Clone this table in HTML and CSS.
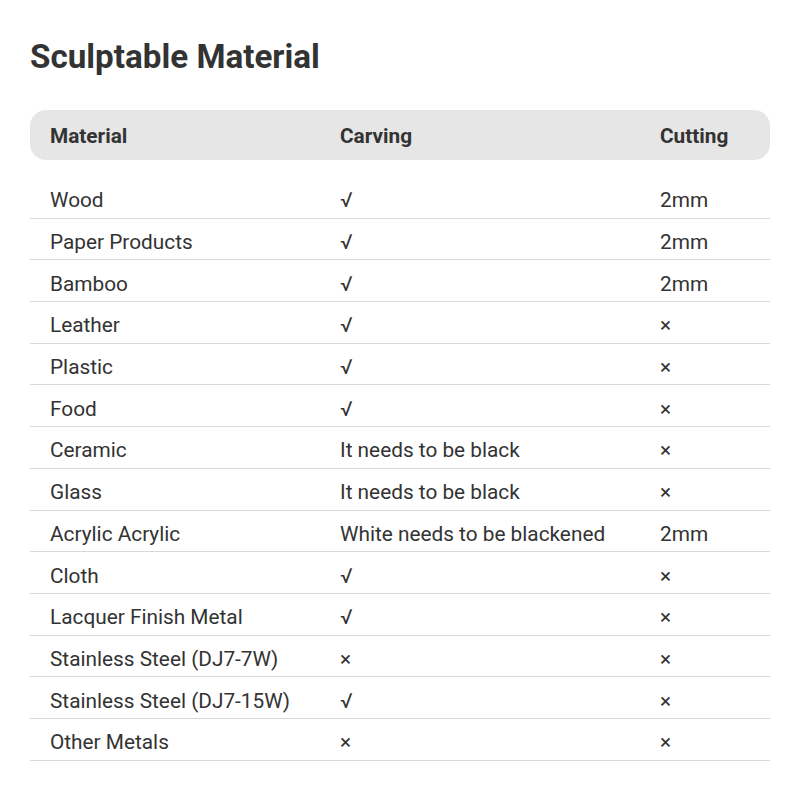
FILE: index.html
```html
<!DOCTYPE html>
<html>
<head>
<meta charset="utf-8">
<link rel="stylesheet" href="styles.css">
</head>
<body>
<div class="page">
  <h1 class="title">Sculptable Material</h1>
  <table class="spec">
    <thead>
      <tr><th class="c1">Material</th><th class="c2">Carving</th><th class="c3">Cutting</th></tr>
    </thead>
    <tbody>
      <tr class="spacer"><td colspan="3"></td></tr>
      <tr><td>Wood</td><td>√</td><td>2mm</td></tr>
      <tr><td>Paper Products</td><td>√</td><td>2mm</td></tr>
      <tr><td>Bamboo</td><td>√</td><td>2mm</td></tr>
      <tr><td>Leather</td><td>√</td><td>×</td></tr>
      <tr><td>Plastic</td><td>√</td><td>×</td></tr>
      <tr><td>Food</td><td>√</td><td>×</td></tr>
      <tr><td>Ceramic</td><td>It needs to be black</td><td>×</td></tr>
      <tr><td>Glass</td><td>It needs to be black</td><td>×</td></tr>
      <tr><td>Acrylic Acrylic</td><td>White needs to be blackened</td><td>2mm</td></tr>
      <tr><td>Cloth</td><td>√</td><td>×</td></tr>
      <tr><td>Lacquer Finish Metal</td><td>√</td><td>×</td></tr>
      <tr><td>Stainless Steel (DJ7-7W)</td><td>×</td><td>×</td></tr>
      <tr><td>Stainless Steel (DJ7-15W)</td><td>√</td><td>×</td></tr>
      <tr><td>Other Metals</td><td>×</td><td>×</td></tr>
    </tbody>
  </table>
</div>
</body>
</html>
```

FILE: styles.css
```css
html, body {
  margin: 0;
  padding: 0;
  background: #ffffff;
}
.page {
  padding: 38px 30px 0 30px;
  font-family: Roboto, "Liberation Sans", sans-serif;
  color: #333333;
}
.title {
  margin: 0 0 34px 0;
  font-size: 33.2px;
  font-weight: 700;
  line-height: 38px;
  color: #333333;
}
.spec {
  width: 740px;
  border-collapse: separate;
  border-spacing: 0;
  font-size: 20.8px;
}
.spec th {
  background: #e6e6e6;
  height: 48px;
  padding: 2px 0 0 20px;
  text-align: left;
  font-weight: 700;
  font-size: 20.8px;
  color: #333333;
}
.spec th.c1 { border-radius: 16px 0 0 16px; width: 270px; }
.spec th.c2 { width: 300px; }
.spec th.c3 { border-radius: 0 16px 16px 0; }
.spec td {
  height: 34.7px;
  padding: 6px 0 0 20px;
  border-bottom: 1px solid #d9d9d9;
  color: #333333;
}
.spec tr.spacer td {
  height: 17px;
  padding: 0;
  border-bottom: none;
}
```
